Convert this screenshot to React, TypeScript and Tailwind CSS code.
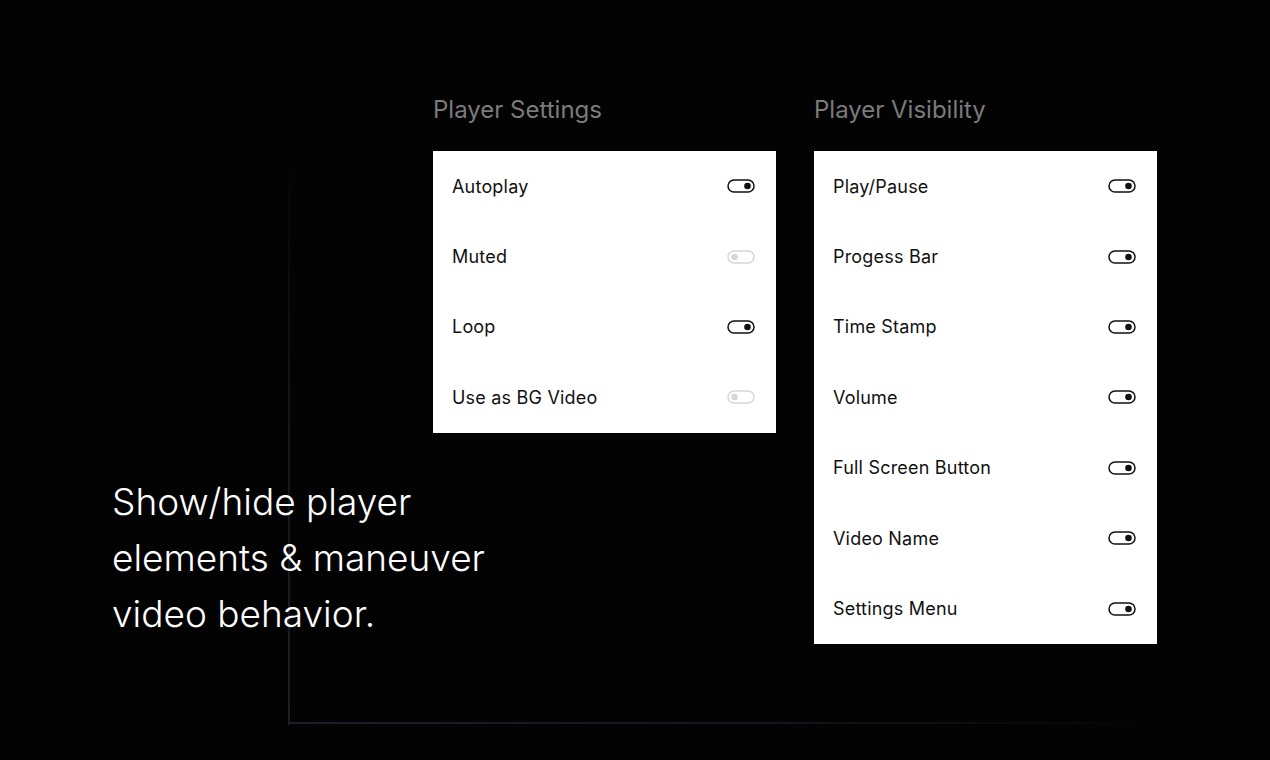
const settings = [
  { label: "Autoplay", on: true },
  { label: "Muted", on: false },
  { label: "Loop", on: true },
  { label: "Use as BG Video", on: false },
];

const visibility = [
  "Play/Pause",
  "Progess Bar",
  "Time Stamp",
  "Volume",
  "Full Screen Button",
  "Video Name",
  "Settings Menu",
];

function Toggle({ on }: { on: boolean }) {
  const c = on ? "#111111" : "#d6d6d6";
  return (
    <svg width="28" height="14" viewBox="0 0 28 14" className="shrink-0">
      <rect x="1" y="1" width="26" height="12" rx="6" fill="none" stroke={c} strokeWidth="1.5" />
      <circle cx={on ? 20.5 : 7.5} cy="7" r="3.3" fill={c} />
    </svg>
  );
}

function Row({ label, on }: { label: string; on: boolean }) {
  return (
    <div className="flex h-[70.4px] items-center justify-between pl-[19px] pr-[21px]">
      <span className="text-[18px] tracking-[0.2px] text-[#111]">{label}</span>
      <Toggle on={on} />
    </div>
  );
}

function Panel({ title, children }: { title: string; children: React.ReactNode }) {
  return (
    <div className="flex w-[343px] flex-col">
      <h2 className="h-[28px] text-[24px] leading-[28px] text-[#7b7b7b]">{title}</h2>
      <div className="mt-[27px] bg-white">{children}</div>
    </div>
  );
}

export default function App() {
  return (
    <div
      className="relative h-[760px] w-full overflow-hidden bg-[#030303] text-white"
      style={{ fontFamily: "Inter, 'Noto Sans', sans-serif" }}
    >
      {/* decorative frame */}
      <div className="absolute left-[288px] top-[150px] h-[575px] w-[2px] bg-gradient-to-b from-transparent via-[#15171d] to-[#1c1f27]" />
      <div className="absolute left-[288px] top-[722px] h-[2px] w-[880px] bg-gradient-to-r from-[#1c1f27] via-[#15171d] to-transparent" />

      <div className="relative flex pl-[112px] pt-[96px]">
        <div className="w-[321px] pt-[378px]">
          <p className="whitespace-nowrap text-[37px] font-light leading-[56px] text-white">
            Show/hide player
            <br />
            elements &amp; maneuver
            <br />
            video behavior.
          </p>
        </div>

        <div className="flex gap-[38px]">
          <Panel title="Player Settings">
            {settings.map((s) => (
              <Row key={s.label} label={s.label} on={s.on} />
            ))}
          </Panel>
          <Panel title="Player Visibility">
            {visibility.map((v) => (
              <Row key={v} label={v} on />
            ))}
          </Panel>
        </div>
      </div>
    </div>
  );
}
